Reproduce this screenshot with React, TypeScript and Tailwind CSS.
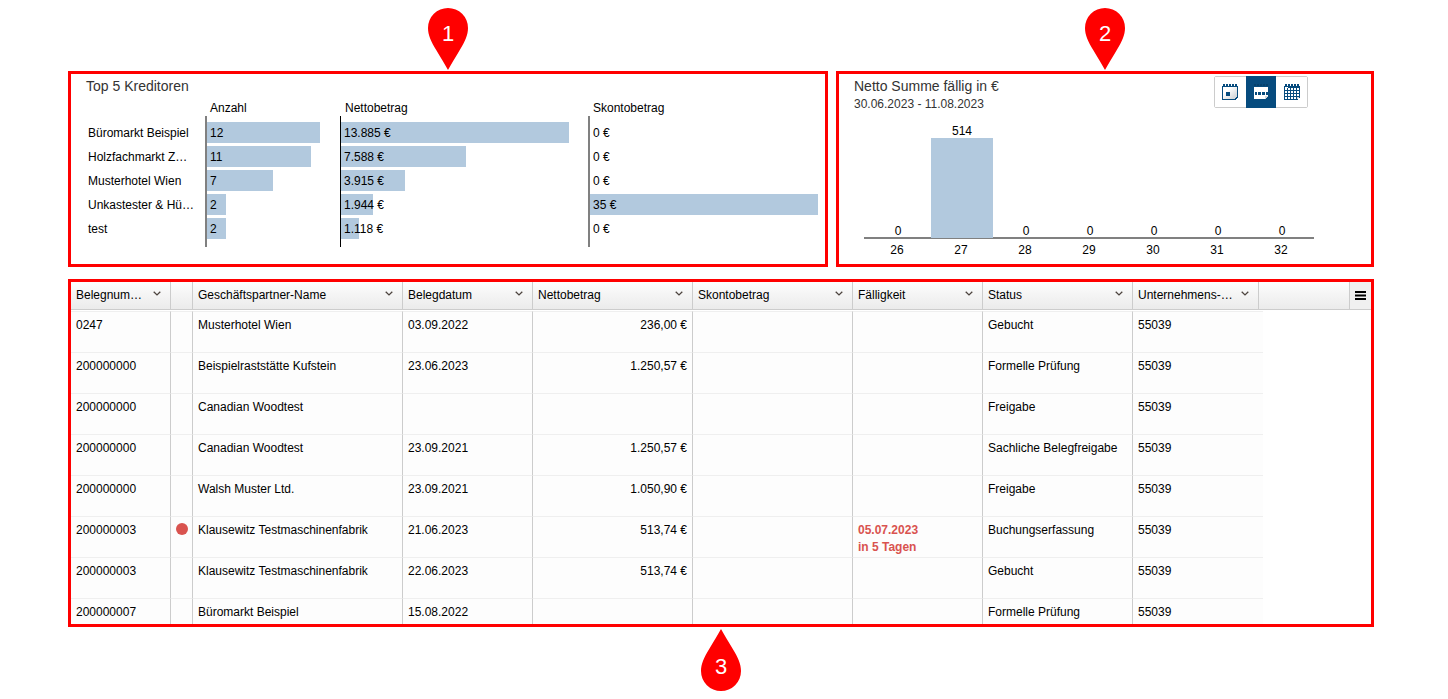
import React, { useState } from "react";

interface PinProps {
  label: string;
  up?: boolean;
}

interface Measure {
  title: string;
  values: number[];
  format: (value: number) => string;
  columnClass: string;
  axisClass: string;
}

interface Invoice {
  number: string;
  partner: string;
  date: string;
  net: string;
  due?: string[];
  status: string;
  company: string;
}

type Range = "day" | "week" | "month";

const creditors = [
  "Büromarkt Beispiel",
  "Holzfachmarkt Z…",
  "Musterhotel Wien",
  "Unkastester & Hü…",
  "test",
];

const euro = (value: number) => `${value.toLocaleString("de-DE")} €`;

const measures: Measure[] = [
  {
    title: "Anzahl",
    values: [12, 11, 7, 2, 2],
    format: String,
    columnClass: "pr-5",
    axisClass: "border-l-2 border-[#808080]",
  },
  {
    title: "Nettobetrag",
    values: [13885, 7588, 3915, 1944, 1118],
    format: euro,
    columnClass: "pr-[19px]",
    axisClass: "border-l border-black",
  },
  {
    title: "Skontobetrag",
    values: [0, 0, 0, 35, 0],
    format: euro,
    columnClass: "",
    axisClass: "border-l-2 border-[#808080]",
  },
];

const weeks = [
  { week: 26, sum: 0 },
  { week: 27, sum: 514 },
  { week: 28, sum: 0 },
  { week: 29, sum: 0 },
  { week: 30, sum: 0 },
  { week: 31, sum: 0 },
  { week: 32, sum: 0 },
];

const columns = [
  { title: "Belegnum…", width: "w-[100px]" },
  { title: "", width: "w-[22px]" },
  { title: "Geschäftspartner-Name", width: "w-[210px]" },
  { title: "Belegdatum", width: "w-[130px]" },
  { title: "Nettobetrag", width: "w-[160px]" },
  { title: "Skontobetrag", width: "w-[160px]" },
  { title: "Fälligkeit", width: "w-[130px]" },
  { title: "Status", width: "w-[150px]" },
  { title: "Unternehmens-…", width: "w-[126px]" },
];

const invoices: Invoice[] = [
  { number: "0247", partner: "Musterhotel Wien", date: "03.09.2022", net: "236,00 €", status: "Gebucht", company: "55039" },
  { number: "200000000", partner: "Beispielraststätte Kufstein", date: "23.06.2023", net: "1.250,57 €", status: "Formelle Prüfung", company: "55039" },
  { number: "200000000", partner: "Canadian Woodtest", date: "", net: "", status: "Freigabe", company: "55039" },
  { number: "200000000", partner: "Canadian Woodtest", date: "23.09.2021", net: "1.250,57 €", status: "Sachliche Belegfreigabe", company: "55039" },
  { number: "200000000", partner: "Walsh Muster Ltd.", date: "23.09.2021", net: "1.050,90 €", status: "Freigabe", company: "55039" },
  {
    number: "200000003",
    partner: "Klausewitz Testmaschinenfabrik",
    date: "21.06.2023",
    net: "513,74 €",
    due: ["05.07.2023", "in 5 Tagen"],
    status: "Buchungserfassung",
    company: "55039",
  },
  { number: "200000003", partner: "Klausewitz Testmaschinenfabrik", date: "22.06.2023", net: "513,74 €", status: "Gebucht", company: "55039" },
  { number: "200000007", partner: "Büromarkt Beispiel", date: "15.08.2022", net: "", status: "Formelle Prüfung", company: "55039" },
];

const Pin: React.FC<PinProps> = ({ label, up }) => (
  <svg width="40" height="62" viewBox="0 0 40 62" className="shrink-0">
    <path
      d="M20 62C17 56.5 13 50 8.5 42.5C3 33.5 0 27 0 20A20 20 0 0 1 40 20C40 27 37 33.5 31.5 42.5C27 50 23 56.5 20 62Z"
      fill="#ff0000"
      transform={up ? "rotate(180 20 31)" : undefined}
    />
    <text x="20" y={up ? 45 : 33} textAnchor="middle" fontSize="22" fill="#fff">
      {label}
    </text>
  </svg>
);

const DayIcon = () => (
  <svg width="16" height="16" viewBox="0 0 16 16" shapeRendering="crispEdges">
    <defs>
      <linearGradient id="sheet" x1="0" y1="0" x2="1" y2="1">
        <stop offset="0.3" stopColor="#fff" />
        <stop offset="1" stopColor="#c8ccd0" />
      </linearGradient>
    </defs>
    <path d="M0 2H16V13L13 16H0Z" fill="#064b7e" />
    <path d="M1 3H15V12L12 15H1Z" fill="url(#sheet)" />
    <path d="M1 0H3V2H1ZM4 0H6V2H4ZM7 0H9V2H7ZM10 0H12V2H10ZM13 0H15V2H13Z" fill="#064b7e" />
    <path d="M4 8H8V12H4Z" fill="#064b7e" />
    <path d="M12 12H15V13H14V14H13V15H12Z" fill="#d5d9dd" />
  </svg>
);

const WeekIcon = () => (
  <svg width="16" height="16" viewBox="0 0 16 16" shapeRendering="crispEdges">
    <path d="M1 0H3V2H1ZM4 0H6V2H4ZM7 0H9V2H7ZM10 0H12V2H10ZM13 0H15V2H13Z" fill="#04406c" />
    <path d="M1 3H15V8H1ZM1 11H15V13L12 15H1Z" fill="#fff" />
    <path d="M4 8H5V11H4ZM8 8H9V11H8ZM12 8H13V11H12ZM1 8H2V11H1Z" fill="#fff" />
    <path d="M12 12H15V13H14V14H13V15H12Z" fill="#d5d9dd" />
  </svg>
);

const MonthIcon = () => (
  <svg width="16" height="16" viewBox="0 0 16 16" shapeRendering="crispEdges">
    <path d="M0 2H16V13L13 16H0Z" fill="#064b7e" />
    <path d="M1 0H3V2H1ZM4 0H6V2H4ZM7 0H9V2H7ZM10 0H12V2H10ZM13 0H15V2H13Z" fill="#064b7e" />
    {[4, 7, 10, 13].map((y) =>
      [1, 4, 7, 10, 13].map((x) => <rect key={`${x}-${y}`} x={x} y={y} width="2" height="2" fill="#fff" />)
    )}
    <path d="M1 3H4V4H1Z" fill="#fff" />
    <path d="M13 13H15V14H14V15H13Z" fill="#d5d9dd" />
  </svg>
);

const Chevron = () => (
  <svg width="8" height="5" viewBox="0 0 8 5" className="mt-1 shrink-0">
    <path d="M0.7 0.7L4 3.9L7.3 0.7" fill="none" stroke="#4d443f" strokeWidth="1.3" />
  </svg>
);

const CreditorChart = () => (
  <section className="flex-1 w-full border-[3px] border-[#ff0000] bg-white pt-0.5">
    <h2 className="pl-[15px] text-sm leading-5 text-[#333]">Top 5 Kreditoren</h2>
    <div className="mt-1 mb-[17px] grid grid-cols-[117px_135fr_248fr_230fr] pl-[17px] pr-[7px]">
      <ul className="flex flex-col gap-[3px] pt-[22px]">
        {creditors.map((name) => (
          <li key={name} className="h-[21px] leading-[23px] whitespace-nowrap">
            {name}
          </li>
        ))}
      </ul>
      {measures.map((measure) => {
        const max = Math.max(...measure.values);
        return (
          <div key={measure.title} className={measure.columnClass}>
            <h3 className="pl-[5px] leading-4">{measure.title}</h3>
            <div className={`flex flex-col gap-[3px] pt-1.5 pb-2 ${measure.axisClass}`}>
              {measure.values.map((value, index) => (
                <div
                  key={creditors[index]}
                  className="h-[21px] leading-[23px] whitespace-nowrap bg-[#b2c9de]"
                  style={{ width: `${(value / max) * 100}%` }}
                >
                  <span className="pl-[3px]">{measure.format(value)}</span>
                </div>
              ))}
            </div>
          </div>
        );
      })}
    </div>
  </section>
);

const DueChart = () => {
  const [range, setRange] = useState<Range>("week");
  const max = Math.max(...weeks.map((item) => item.sum));

  const ranges: { id: Range; label: string; icon: React.ReactNode }[] = [
    { id: "day", label: "Tag", icon: <DayIcon /> },
    { id: "week", label: "Woche", icon: <WeekIcon /> },
    { id: "month", label: "Monat", icon: <MonthIcon /> },
  ];

  return (
    <section className="flex-1 w-full border-[3px] border-[#ff0000] bg-white pt-0.5">
      <header className="flex justify-between items-start pl-[15px] pr-[63px] text-[#333]">
        <div>
          <h2 className="text-sm leading-5">Netto Summe fällig in €</h2>
          <p className="leading-4">30.06.2023 - 11.08.2023</p>
        </div>
        <div className="flex h-8 w-[94px] rounded-xs border border-[#ccc]">
          {ranges.map((item) => (
            <button
              key={item.id}
              type="button"
              aria-label={item.label}
              aria-pressed={range === item.id}
              onClick={() => setRange(item.id)}
              className={`flex flex-1 items-center justify-center cursor-pointer ${
                range === item.id ? "-my-px bg-[#064b7e]" : "bg-white"
              }`}
            >
              {item.icon}
            </button>
          ))}
        </div>
      </header>
      <div className="mt-3 ml-[25px] mr-[57px]">
        <div className="flex h-[114px] items-end px-px">
          {weeks.map((item) => (
            <div key={item.week} className="flex-1 pl-0.5 text-center">
              <div className="leading-[14px]">{item.sum}</div>
              <div className="bg-[#b2c9de]" style={{ height: (item.sum / max) * 100 }} />
            </div>
          ))}
        </div>
        <div className="-mt-px h-0.5 bg-[#808080]" />
        <div className="mt-[3px] flex px-px">
          {weeks.map((item) => (
            <div key={item.week} className="flex-1 text-center leading-4">
              {item.week}
            </div>
          ))}
        </div>
      </div>
    </section>
  );
};

const cell = "h-[41px] border-t border-t-[#efefef] bg-[#fdfdfd] px-[5px] pt-[5px] align-top whitespace-nowrap";
const lined = `${cell} border-r border-r-[#ccc]`;
const head = "h-7 border-b border-r border-[#ccc] bg-linear-to-b from-[#fdfdfd] to-[#ebebeb] p-0 pt-[5px] align-top font-normal";

const InvoiceTable = () => (
  <section className="h-[348px] w-full overflow-hidden border-[3px] border-[#ff0000] bg-white">
    <table className="w-full table-fixed border-separate border-spacing-0 text-left leading-[17px]">
      <colgroup>
        {columns.map((column, index) => (
          <col key={index} className={column.width} />
        ))}
        <col className="w-1" />
        <col />
        <col className="w-[21px]" />
      </colgroup>
      <thead>
        <tr>
          {columns.map((column, index) => (
            <th key={index} className={head}>
              {column.title && (
                <button
                  type="button"
                  className="flex w-full items-start justify-between pl-[5px] pr-[9px] leading-4 whitespace-nowrap cursor-pointer"
                >
                  <span>{column.title}</span>
                  <Chevron />
                </button>
              )}
            </th>
          ))}
          <th colSpan={2} className={head} />
          <th className="h-7 border-b border-[#ccc] bg-[#f0f0f0] p-0">
            <button type="button" aria-label="Spalten" className="flex w-full justify-center cursor-pointer">
              <svg width="11" height="9" viewBox="0 0 11 9">
                <path d="M0 0H11V2H0ZM0 3.5H11V5.5H0ZM0 7H11V9H0Z" fill="#000" />
              </svg>
            </button>
          </th>
        </tr>
        <tr aria-hidden="true">
          <td colSpan={12} className="h-px p-0" />
        </tr>
      </thead>
      <tbody>
        {invoices.map((invoice, index) => (
          <tr key={index}>
            <td className={lined}>{invoice.number}</td>
            <td className={lined}>
              {invoice.due && (
                <div className="-mx-1 mt-px flex justify-center">
                  <span className="size-3 rounded-full bg-[#d9534f]" />
                </div>
              )}
            </td>
            <td className={lined}>{invoice.partner}</td>
            <td className={lined}>{invoice.date}</td>
            <td className={`${lined} text-right`}>{invoice.net}</td>
            <td className={lined} />
            <td className={`${lined} font-bold text-[#d9534f]`}>
              {invoice.due?.map((line) => (
                <div key={line}>{line}</div>
              ))}
            </td>
            <td className={lined}>{invoice.status}</td>
            <td colSpan={2} className={cell}>
              {invoice.company}
            </td>
          </tr>
        ))}
      </tbody>
    </table>
  </section>
);

const App: React.FC = () => {
  return (
    <main className="flex flex-col gap-3 bg-white pt-2 pl-[68px] pr-[74px] font-['Liberation_Sans',Arial,sans-serif] text-xs text-black">
      <div className="grid grid-cols-[760fr_538fr] gap-2">
        <div className="flex flex-col items-center gap-px">
          <Pin label="1" />
          <CreditorChart />
        </div>
        <div className="flex flex-col items-center gap-px">
          <Pin label="2" />
          <DueChart />
        </div>
      </div>
      <div className="flex flex-col items-center gap-0.5">
        <InvoiceTable />
        <Pin label="3" up />
      </div>
    </main>
  );
};

export default App;
